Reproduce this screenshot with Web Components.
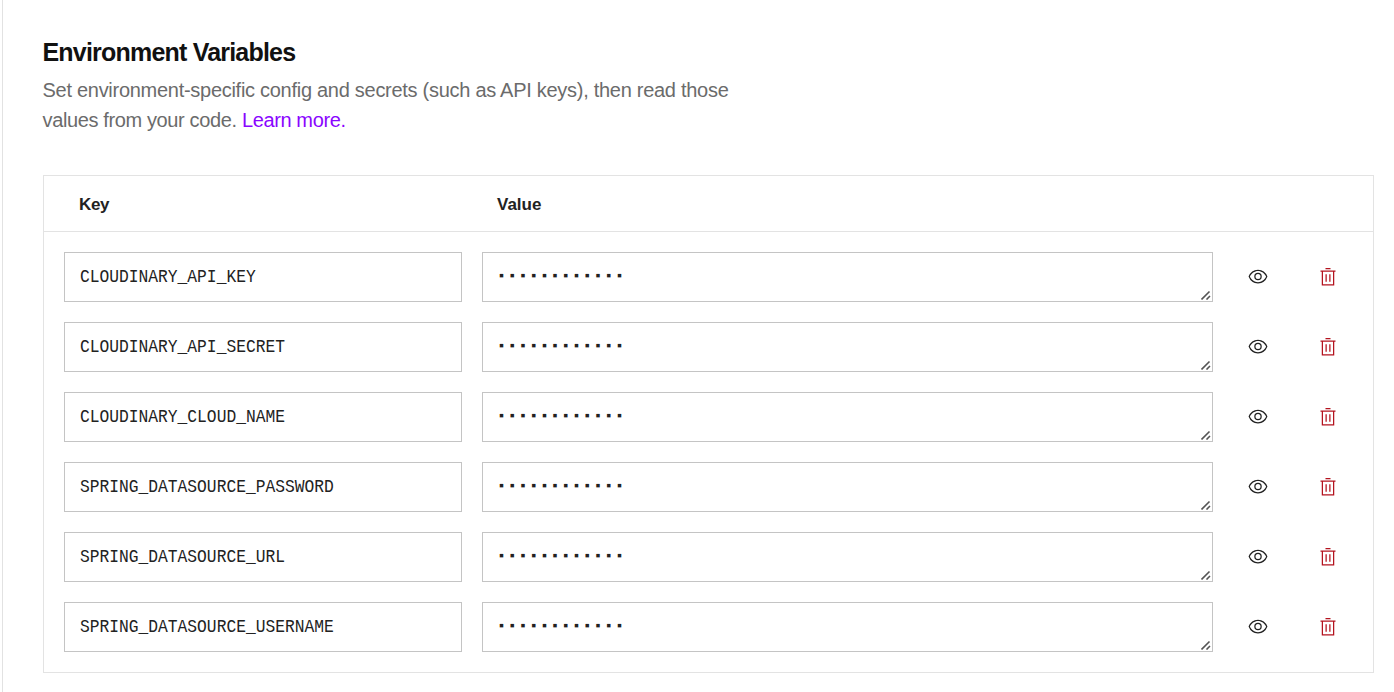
<!DOCTYPE html>
<html lang="en">
<head>
<meta charset="utf-8">
<title>Environment Variables</title>
<style>
html,body{margin:0;height:100%;background:#fff;overflow:hidden}
body{font-family:"Liberation Sans",Arial,sans-serif;color:#222}
</style>
</head>
<body>
<env-page>
  <section-heading>
    <span slot="title">Environment Variables</span>
    <span>Set environment-specific config and secrets (such as API keys), then read those</span>
    <span slot="more">values from your code. </span>
    <text-link slot="more">Learn more.</text-link>
  </section-heading>
  <env-table>
    <env-row>CLOUDINARY_API_KEY</env-row>
    <env-row>CLOUDINARY_API_SECRET</env-row>
    <env-row>CLOUDINARY_CLOUD_NAME</env-row>
    <env-row>SPRING_DATASOURCE_PASSWORD</env-row>
    <env-row>SPRING_DATASOURCE_URL</env-row>
    <env-row>SPRING_DATASOURCE_USERNAME</env-row>
  </env-table>
</env-page>
<script>
const define = (name, html) => customElements.define(name, class extends HTMLElement {
  constructor() {
    super();
    this.attachShadow({mode: 'open'}).innerHTML = html;
  }
});

define('env-page', `<style>
:host{display:block;box-sizing:border-box;height:692px;margin-left:2px;border-left:1px solid #e2e2e2;padding:37px 20px 0 40px}
</style><slot></slot>`);

define('section-heading', `<style>
:host{display:block;height:138px}
h2{margin:0 0 0 -.5px;font-size:25px;line-height:30px;font-weight:700;letter-spacing:-.8px;color:#111}
p{margin:8px 0 0 -.5px;font-size:20px;line-height:30px;letter-spacing:-.28px;color:#6b6b6b;white-space:nowrap}
p+p{margin-top:0;letter-spacing:-.37px}
</style><h2><slot name="title"></slot></h2><p><slot></slot></p><p><slot name="more"></slot></p>`);

define('text-link', `<style>:host{display:inline;color:#8a05ff}</style><slot></slot>`);

define('env-table', `<style>
:host{display:block;box-sizing:border-box;width:1331px;height:498px;border:1px solid #e3e3e3}
header{display:grid;grid-template-columns:418px 1fr;padding:0 35px;height:55px;line-height:57px;border-bottom:1px solid #e3e3e3;font-size:17px;font-weight:700;color:#222}
header span:first-child{letter-spacing:-.4px}
.rows{display:grid;gap:20px;padding:20px}
</style><header><span>Key</span><span>Value</span></header><div class="rows"><slot></slot></div>`);

define('env-row', `<style>
:host{display:grid;grid-template-columns:398px 731px 50px 50px;column-gap:20px;height:50px;align-items:center}
.field{box-sizing:border-box;height:50px;border:1px solid #c4c4c4;padding:0 15px;line-height:49px;white-space:nowrap;font-family:"Liberation Mono",monospace;color:#222}
.key{font-size:18px;padding-left:14.5px;line-height:48px}
.key span{display:inline-block;transform:scaleX(.9035);transform-origin:0 50%}
.value{display:flex;justify-content:space-between;padding:0 1px 0 16px}
.dots{font-family:"Liberation Sans",sans-serif;font-size:14px;letter-spacing:5.76px;line-height:45px}
.grip{align-self:flex-end;margin-bottom:1px}
svg{display:block}
.icon{justify-self:center}
</style>
<div class="field key"><span><slot></slot></span></div>
<div class="field value"><span class="dots">▪▪▪▪▪▪▪▪▪▪▪▪</span>
<svg class="grip" width="10" height="10" viewBox="0 0 10 10" fill="none" stroke="#555" stroke-width="1.6"><path d="M.5 9.5 8.5 1.5M5.5 9.5 9 6"/></svg></div>
<svg class="icon" width="20" height="20" viewBox="0 .8 32 32" fill="#222"><path d="M30.94 15.66A16.69 16.69 0 0 0 16 5 16.69 16.69 0 0 0 1.06 15.66a1 1 0 0 0 0 .68A16.69 16.69 0 0 0 16 27a16.69 16.69 0 0 0 14.94-10.66 1 1 0 0 0 0-.68ZM16 25c-5.3 0-10.9-3.93-12.93-9C5.1 10.93 10.7 7 16 7s10.9 3.93 12.93 9C26.9 21.07 21.3 25 16 25Z"/><path d="M16 10a6 6 0 1 0 6 6 6 6 0 0 0-6-6Zm0 10a4 4 0 1 1 4-4 4 4 0 0 1-4 4Z"/></svg>
<svg class="icon" width="20" height="20" viewBox="0 .3 32 32" fill="#b4131f"><path d="M12 12h2v12h-2zM18 12h2v12h-2zM4 6v2h2v22h20V8h2V6ZM8 28V8h16v20ZM12 2h8v2h-8z"/></svg>`);
</script>
</body>
</html>
